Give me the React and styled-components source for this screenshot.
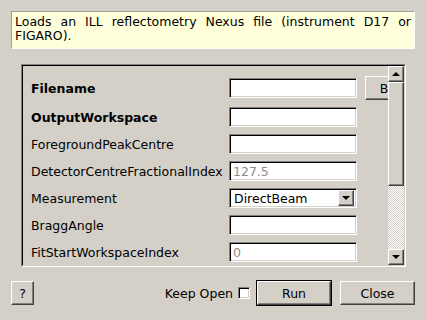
import React from 'react'
import styled, { createGlobalStyle, css } from 'styled-components'

const GlobalStyle = createGlobalStyle`
    html, body {
        margin: 0;
        padding: 0;
        background: #d4d0c8;
    }
    * {
        box-sizing: border-box;
    }
`;

const raised = css`
    border: 1px solid;
    border-color: #ffffff #404040 #404040 #ffffff;
    box-shadow: inset -1px -1px #808080;
    background: #d4d0c8;
`;

const sunken = css`
    border: 1px solid;
    border-color: #808080 #ffffff #ffffff #808080;
    box-shadow: inset 1px 1px #000000, inset -1px -1px #d4d0c8;
    background: #ffffff;
`;

const Dialog = styled.div`
    width: 426px;
    height: 320px;
    padding: 11px;
    display: flex;
    flex-direction: column;
    font-family: "DejaVu Sans", Verdana, sans-serif;
    font-size: 12.5px;
    color: #000;
    background: #d4d0c8;
`;

const Description = styled.div`
    background: #ffffdc;
    border: 1px solid;
    border-color: #a0a0a0 #ffffff #ffffff #a0a0a0;
    padding: 3px 3px 4px 3px;
    line-height: 14px;
    text-align: justify;
    height: 38px;
    flex-shrink: 0;
`;

const FrameOuter = styled.div`
    margin: 15px 9px 0 10px;
    height: 203px;
    flex-shrink: 0;
    border: 1px solid;
    border-color: #808080 #ffffff #ffffff #808080;
    display: flex;
`;

const FrameInner = styled.div`
    flex: 1;
    border: 1px solid;
    border-color: #000000 #d4d0c8 #d4d0c8 #000000;
    display: flex;
    min-width: 0;
`;

const Viewport = styled.div`
    flex: 1;
    overflow: hidden;
    min-width: 0;
`;

const PropertyGrid = styled.div`
    display: grid;
    grid-template-columns: 190px 128px 75px;
    column-gap: 8px;
    row-gap: 7px;
    padding: 10px 0 0 8px;
    align-items: center;
`;

const Label = styled.div`
    font-weight: ${p => (p.$required ? 700 : 400)};
    white-space: nowrap;
    padding-top: 1px;
`;

const TextBox = styled.input`
    ${sunken};
    height: 20px;
    width: 128px;
    padding: 0 3px;
    font: inherit;
    color: #000;
    outline: none;
    &:disabled {
        color: #8c8c8c;
    }
`;

const Combo = styled.div`
    ${sunken};
    height: 20px;
    display: flex;
    align-items: center;
    padding: 2px 2px 2px 4px;
    span {
        flex: 1;
    }
`;

const ComboButton = styled.div`
    ${raised};
    width: 16px;
    height: 16px;
    display: flex;
    align-items: center;
    justify-content: center;
`;

const Arrow = styled.div`
    width: 0;
    height: 0;
    border-left: 4px solid transparent;
    border-right: 4px solid transparent;
    ${p => p.$up
        ? css`border-bottom: 4px solid #000;`
        : css`border-top: 4px solid #000;`}
`;

const Button = styled.button`
    ${raised};
    font: inherit;
    color: #000;
    height: 24px;
    width: ${p => p.$width || 75}px;
    margin-left: ${p => p.$gap || 0}px;
    padding: 0;
    flex-shrink: 0;
    ${p => p.$default && css`
        outline: 1px solid #000;
    `}
`;

const BrowseButton = styled(Button)`
    justify-self: start;
`;

const ScrollBar = styled.div`
    width: 16px;
    display: flex;
    flex-direction: column;
`;

const ScrollButton = styled.div`
    ${raised};
    height: 16px;
    display: flex;
    align-items: center;
    justify-content: center;
`;

const ScrollHandle = styled.div`
    ${raised};
    height: 104px;
`;

const ScrollTrough = styled.div`
    flex: 1;
    background: repeating-conic-gradient(#ffffff 0 25%, #d4d0c8 0 50%) 0 0 / 2px 2px;
`;

const Footer = styled.div`
    margin-top: 14px;
    display: flex;
    align-items: center;
    height: 24px;
    flex-shrink: 0;
`;

const Spacer = styled.div`
    flex: 1;
`;

const KeepOpen = styled.label`
    display: flex;
    align-items: center;
    gap: 5px;
    margin-right: 7px;
`;

const CheckBox = styled.span`
    ${sunken};
    width: 12px;
    height: 12px;
    display: inline-block;
`;

const properties = [
    { name: 'Filename', required: true, browse: true },
    { name: 'OutputWorkspace', required: true },
    { name: 'ForegroundPeakCentre' },
    { name: 'DetectorCentreFractionalIndex', placeholder: '127.5' },
    { name: 'Measurement', combo: 'DirectBeam' },
    { name: 'BraggAngle' },
    { name: 'FitStartWorkspaceIndex', placeholder: '0' },
];

export default function App() {
    return (
        <>
            <GlobalStyle />
            <Dialog>
                <Description>
                    Loads an ILL reflectometry Nexus file (instrument D17 or FIGARO).
                </Description>
                <FrameOuter>
                    <FrameInner>
                        <Viewport>
                            <PropertyGrid>
                                {properties.map(p => (
                                    <React.Fragment key={p.name}>
                                        <Label $required={p.required}>{p.name}</Label>
                                        {p.combo ? (
                                            <Combo>
                                                <span>{p.combo}</span>
                                                <ComboButton><Arrow /></ComboButton>
                                            </Combo>
                                        ) : (
                                            <TextBox
                                                readOnly
                                                value={p.placeholder || ''}
                                                disabled={!!p.placeholder}
                                            />
                                        )}
                                        {p.browse ? <BrowseButton>Browse</BrowseButton> : <div />}
                                    </React.Fragment>
                                ))}
                            </PropertyGrid>
                        </Viewport>
                        <ScrollBar>
                            <ScrollButton><Arrow $up /></ScrollButton>
                            <ScrollHandle />
                            <ScrollTrough />
                            <ScrollButton><Arrow /></ScrollButton>
                        </ScrollBar>
                    </FrameInner>
                </FrameOuter>
                <Footer>
                    <Button $width={23}>?</Button>
                    <Spacer />
                    <KeepOpen>
                        Keep Open
                        <CheckBox />
                    </KeepOpen>
                    <Button $default $width={74}>Run</Button>
                    <Button $gap={9}>Close</Button>
                </Footer>
            </Dialog>
        </>
    );
}
